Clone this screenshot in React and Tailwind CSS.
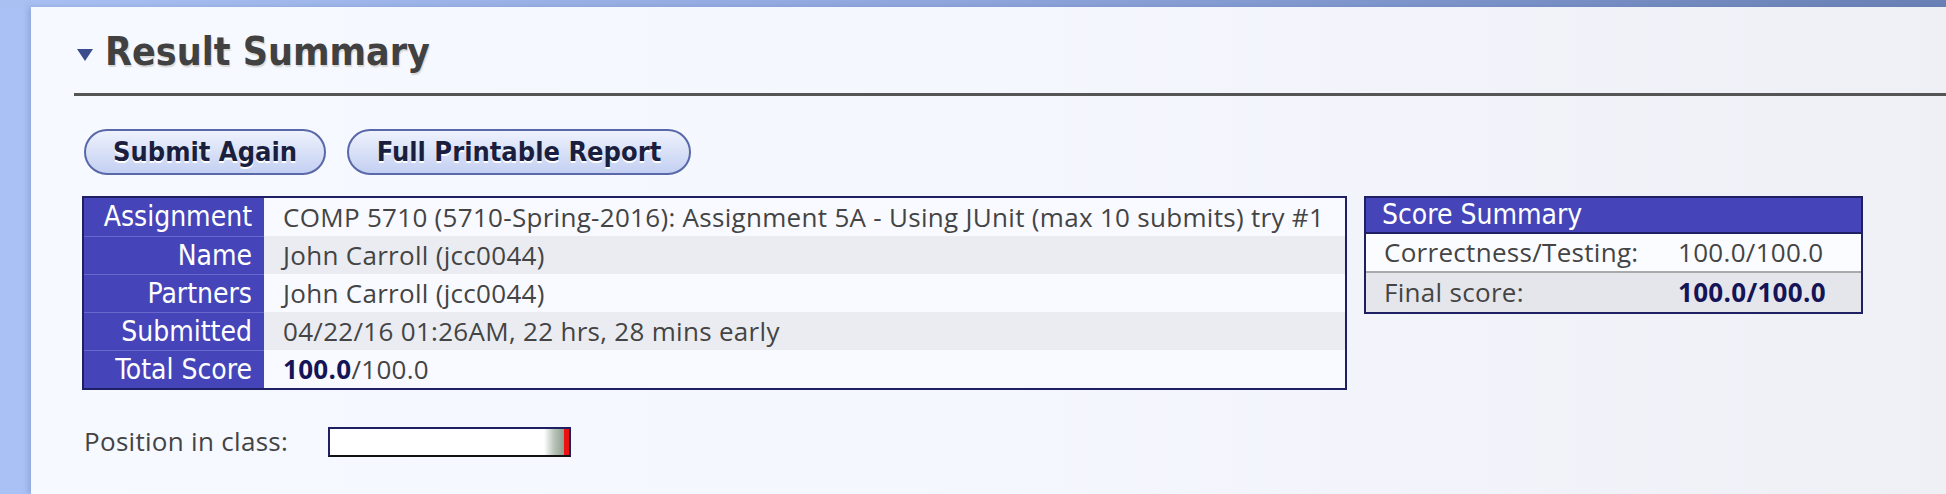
import React from 'react';

const cond = { fontFamily: "'DejaVu Sans Condensed', 'Liberation Sans Narrow', 'Roboto Condensed', Lato, sans-serif" };
const body = { fontFamily: "'Open Sans', Lato, sans-serif" };

const rows = [
  { label: 'Assignment', value: 'COMP 5710 (5710-Spring-2016): Assignment 5A - Using JUnit (max 10 submits) try #1' },
  { label: 'Name', value: 'John Carroll (jcc0044)' },
  { label: 'Partners', value: 'John Carroll (jcc0044)' },
  { label: 'Submitted', value: '04/22/16 01:26AM, 22 hrs, 28 mins early' },
  { label: 'Total Score', value: null },
];

function PillButton({ children, width }) {
  return (
    <button
      className={`h-[46px] ${width} rounded-full border-2 border-[#5868a8] bg-gradient-to-b from-[#eef2fd] to-[#c4d0f2] text-[27px] font-bold text-[#1b1f3f] [text-shadow:0_2px_0_#ffffff]`}
      style={cond}
    >
      {children}
    </button>
  );
}

export default function App() {
  return (
    <div className="min-h-screen bg-[#a9c1f5]">
      {/* top strip */}
      <div className="h-[7px] bg-gradient-to-r from-[#a9c0f2] via-[#8ea6dc] to-[#6a81b6]" />
      <div className="flex">
        <div className="w-[31px] shrink-0 bg-[#a9c1f5]" />
        <div className="flex-1 min-h-[487px] bg-gradient-to-r from-[#f6f9ff] via-[#f4f7fd] to-[#eef0f6] shadow-[-3px_0_5px_rgba(80,100,160,0.25)] pl-[43px]">
          {/* heading */}
          <div className="pt-[22px] pb-[19px] border-b-[3px] border-[#555555] flex items-center">
            <svg width="16" height="12" viewBox="0 0 16 12" className="ml-[3px] mt-[6px]">
              <polygon points="0,0 16,0 8,12" fill="#3b4d8e" />
            </svg>
            <h2
              className="ml-[12px] text-[39px] leading-[45px] font-bold text-[#414141] [text-shadow:1px_2px_1px_#d8d8d8]"
              style={cond}
            >
              Result Summary
            </h2>
          </div>

          {/* buttons */}
          <div className="mt-[33px] ml-[10px] flex gap-[21px]">
            <PillButton width="w-[242px]">Submit Again</PillButton>
            <PillButton width="w-[344px]">Full Printable Report</PillButton>
          </div>

          {/* tables */}
          <div className="mt-[21px] ml-[8px] flex items-start gap-[17px]">
            <div className="w-[1265px] border-2 border-[#1f1f63]">
              {rows.map((r, i) => (
                <div key={r.label} className="flex h-[38px]">
                  <div
                    className={`w-[180px] shrink-0 bg-[#4545b9] text-white text-[28px] text-right pr-[12px] leading-[37px] ${i > 0 ? 'border-t border-[#6868cc]' : ''}`}
                    style={cond}
                  >
                    {r.label}
                  </div>
                  <div
                    className={`flex-1 pl-[19px] text-[26px] tracking-[0.3px] leading-[38px] text-[#444444] ${i % 2 === 1 ? 'bg-[#eaecf1]' : 'bg-[#f8faff]'}`}
                    style={body}
                  >
                    {r.value ?? (
                      <span>
                        <span className="font-bold text-[#141457]">100.0</span>/100.0
                      </span>
                    )}
                  </div>
                </div>
              ))}
            </div>

            <div className="w-[499px] border-2 border-[#1f1f63]">
              <div className="h-[34px] bg-[#4545b9] text-white text-[28px] leading-[34px] pl-[16px]" style={cond}>
                Score Summary
              </div>
              <div className="h-[39px] flex items-center bg-[#fbfcff] border-t-2 border-[#1f1f63] text-[26px] tracking-[0.3px] text-[#444444]" style={body}>
                <span className="w-[312px] pl-[18px]">Correctness/Testing:</span>
                <span>100.0/100.0</span>
              </div>
              <div className="h-[41px] flex items-center bg-[#e5e6eb] border-t-2 border-[#aaaaaa] text-[26px] tracking-[0.3px] text-[#444444]" style={body}>
                <span className="w-[312px] pl-[18px]">Final score:</span>
                <span className="font-bold text-[#141457]">100.0/100.0</span>
              </div>
            </div>
          </div>

          {/* position in class */}
          <div className="mt-[32px] ml-[10px] flex items-center">
            <span className="w-[244px] text-[26px] tracking-[0.3px] text-[#444444]" style={body}>
              Position in class:
            </span>
            <div className="w-[243px] h-[30px] border-2 border-[#1f1f63] border-b-[#111111] bg-white flex justify-end">
              <div className="w-[20px] h-full bg-gradient-to-r from-[#ffffff] via-[#b9c4b9] to-[#8f9f8f]" />
              <div className="w-[5px] h-full bg-[#ee1111]" />
            </div>
          </div>
        </div>
      </div>
    </div>
  );
}
